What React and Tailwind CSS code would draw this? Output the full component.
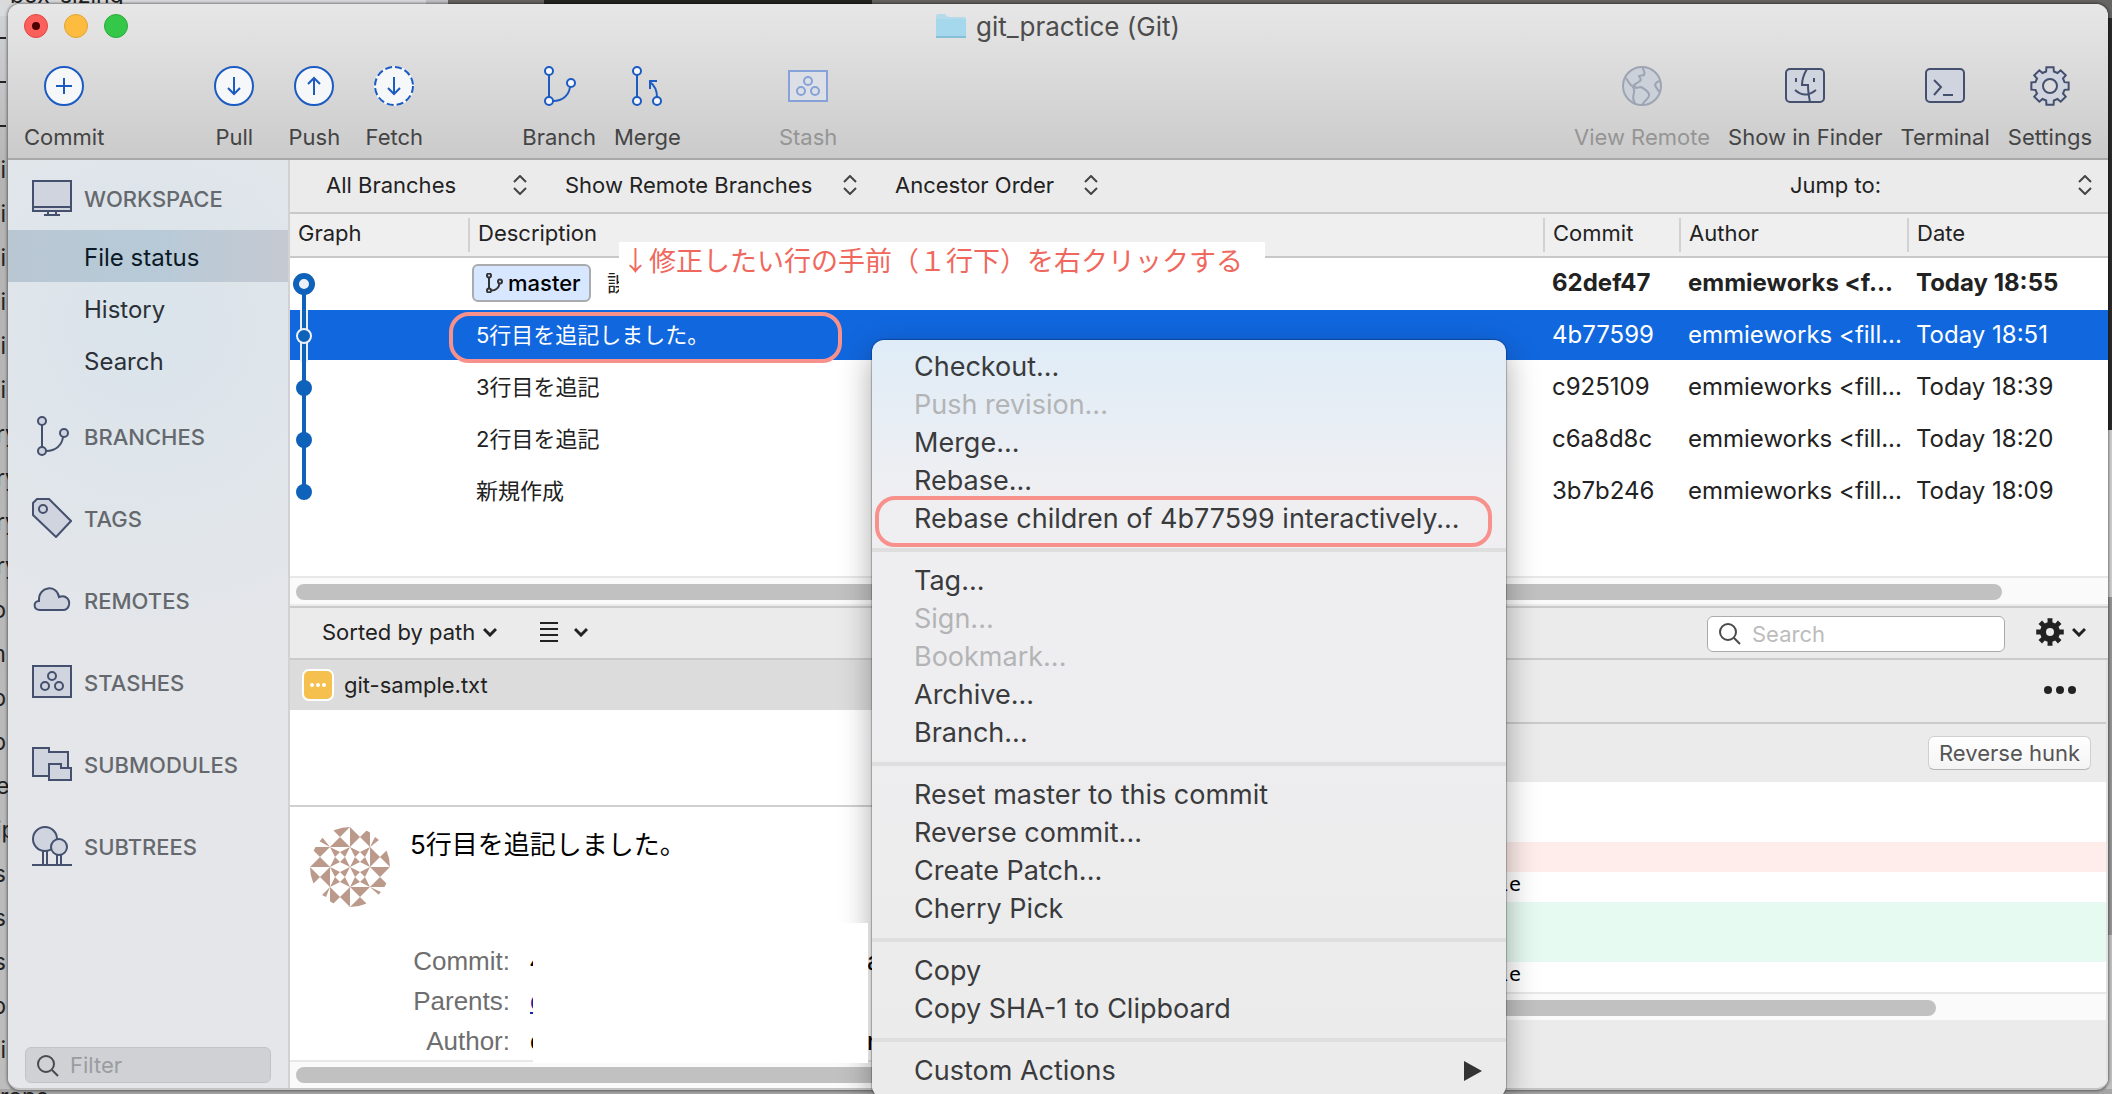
import React from "react";

const NAVY = "#44506e";
const BLUE = "#1b5bc2";
const PALE = "#cfd4df";

function gearPath(c, outer, root, teeth, tipHalf, baseHalf) {
  const pts = [];
  for (let i = 0; i < teeth; i++) {
    const a = (i * 2 * Math.PI) / teeth - Math.PI / 2;
    [
      [root, -baseHalf],
      [outer, -tipHalf],
      [outer, tipHalf],
      [root, baseHalf],
    ].forEach(([r, d]) => {
      pts.push(`${(c + r * Math.cos(a + d)).toFixed(2)} ${(c + r * Math.sin(a + d)).toFixed(2)}`);
    });
  }
  return `M${pts.join("L")}Z`;
}

function Icon({ children, stroke = NAVY, fill = PALE, className = "size-10" }) {
  return (
    <svg viewBox="0 0 40 40" className={`${className} shrink-0`} fill={fill} stroke={stroke} strokeWidth="2" aria-hidden="true">
      {children}
    </svg>
  );
}

const BranchShape = ({ fill }) => (
  <>
    <path d="M10 9V31" />
    <path d="M14 35C24 35 30 29 31 21" fill="none" />
    <circle cx="10" cy="5" r="4" fill={fill} />
    <circle cx="10" cy="35" r="4" fill={fill} />
    <circle cx="32" cy="17" r="4" fill={fill} />
  </>
);

const toolIcons = {
  commit: (
    <Icon stroke={BLUE} fill="#f6f7f9">
      <circle cx="20" cy="20" r="19" />
      <path d="M20 12V28M12 20H28" />
    </Icon>
  ),
  pull: (
    <Icon stroke={BLUE} fill="#f6f7f9">
      <circle cx="20" cy="20" r="19" />
      <path d="M20 11V28M14 22L20 28L26 22" fill="none" />
    </Icon>
  ),
  push: (
    <Icon stroke={BLUE} fill="#f6f7f9">
      <circle cx="20" cy="20" r="19" />
      <path d="M20 29V12M14 18L20 12L26 18" fill="none" />
    </Icon>
  ),
  fetch: (
    <Icon stroke={BLUE} fill="#f6f7f9">
      <circle cx="20" cy="20" r="20" stroke="none" />
      <circle cx="20" cy="20" r="19" strokeDasharray="7 3" />
      <path d="M20 11V28M14 22L20 28L26 22" fill="none" />
    </Icon>
  ),
  branch: (
    <Icon stroke={BLUE} fill="#f6f7f9">
      <BranchShape fill="#f6f7f9" />
    </Icon>
  ),
  merge: (
    <Icon stroke={BLUE} fill="#f6f7f9">
      <path d="M10 9V31" />
      <path d="M30 31C30 25 27 19 23 16M23 23V15H30" fill="none" />
      <circle cx="10" cy="5" r="4" />
      <circle cx="10" cy="35" r="4" />
      <circle cx="30" cy="35" r="4" />
    </Icon>
  ),
  stash: (
    <Icon stroke="#86a2d8" fill="#dcdfe6">
      <rect x="1" y="5" width="38" height="30" />
      <circle cx="20" cy="15" r="4" />
      <circle cx="13" cy="25" r="4" />
      <circle cx="27" cy="25" r="4" />
    </Icon>
  ),
  globe: (
    <Icon stroke="#9da4b2" fill="#cbd0d9">
      <circle cx="20" cy="20" r="19" />
      <path
        d="M21 1C20 4 24 5 22 9L17 10C18 13 20 13 18 15L12 19L14 22L19 21C23 23 25 24 27 28C28 33 22 34 20 39M4 12C6 15 7 18 10 20C13 22 12 24 12 27C11 30 10 33 13 37M39 15C34 15 32 19 34 21C35 23 36 25 38 26"
        fill="none"
      />
    </Icon>
  ),
  finder: (
    <Icon>
      <rect x="1" y="3" width="38" height="33" rx="4" />
      <path d="M22 3C19 8 17 14 17 19H23C23 25 24 31 25 36M11 12V16M29 12V16M10 24Q20 33 31 24" fill="none" />
    </Icon>
  ),
  terminal: (
    <Icon>
      <rect x="1" y="3" width="38" height="33" rx="4" />
      <path d="M9 14L16 21L9 29M18 29H28" fill="none" />
    </Icon>
  ),
  settings: (
    <Icon>
      <path d={gearPath(20, 19, 15, 8, 0.19, 0.26)} />
      <circle cx="20" cy="20" r="7" fill="#dcdcde" />
    </Icon>
  ),
};

function Tool({ icon, label, disabled, className = "" }) {
  return (
    <button type="button" disabled={disabled} className={`flex flex-col items-center gap-[17px] text-[#444] disabled:text-[#959595] ${className}`}>
      {toolIcons[icon]}
      <span className="text-[22px] leading-7 whitespace-nowrap">{label}</span>
    </button>
  );
}

const sideIcons = {
  WORKSPACE: (
    <Icon>
      <path d="M1 3H39V33H1ZM1 29H39M12 37H28M16 33V37M24 33V37" />
    </Icon>
  ),
  BRANCHES: (
    <Icon>
      <BranchShape fill={PALE} />
    </Icon>
  ),
  TAGS: (
    <Icon>
      <path d="M1 5L5 1H17L39 23L24 39L1 17Z" />
      <circle cx="11" cy="11" r="4" />
    </Icon>
  ),
  REMOTES: (
    <Icon>
      <path d="M8 30C1 30 1 21 7 21C6 6 25 4 27 17C34 14 38 20 37 25C36 29 33 30 31 30Z" />
    </Icon>
  ),
  STASHES: (
    <Icon>
      <path d="M1 4H39V35H1Z" />
      <circle cx="20" cy="14" r="4" />
      <circle cx="13" cy="24" r="4" />
      <circle cx="27" cy="24" r="4" />
    </Icon>
  ),
  SUBMODULES: (
    <Icon>
      <path d="M1 4H17V8H36V32H1Z" />
      <path d="M17 20H29V24H39V36H17Z" />
    </Icon>
  ),
  SUBTREES: (
    <Icon>
      <path d="M11 24V39M15 24V39M25 29V39M29 29V39" />
      <circle cx="13" cy="13" r="12" />
      <circle cx="27" cy="21" r="8" />
      <path d="M0 39H40" />
    </Icon>
  ),
};

function SideHead({ name }) {
  return (
    <a href={`#${name.toLowerCase()}`} className="flex items-center gap-3 pl-6 text-[22px] leading-7 font-medium text-[#65696e]">
      {sideIcons[name]}
      <span className="pt-0.5">{name}</span>
    </a>
  );
}

const UpDown = () => (
  <svg viewBox="0 0 14 20" className="pointer-events-none absolute top-1 right-0 h-5 w-3.5" fill="none" stroke="#444" strokeWidth="2" aria-hidden="true">
    <path d="M1 7L7 1L13 7M1 13L7 19L13 13" />
  </svg>
);

const Chevron = () => (
  <svg viewBox="0 0 14 10" className="h-2.5 w-3.5 shrink-0" fill="none" stroke="#222" strokeWidth="3" aria-hidden="true">
    <path d="M1 2L7 8L13 2" />
  </svg>
);

const Magnifier = ({ className }) => (
  <svg viewBox="0 0 22 22" className={`pointer-events-none absolute size-[22px] ${className}`} fill="none" stroke="#4a4a4a" strokeWidth="2" aria-hidden="true">
    <circle cx="9" cy="9" r="8" />
    <path d="M15 15L21 21" />
  </svg>
);

function Picker({ label, value, className }) {
  return (
    <div className={`relative ${className}`}>
      <select aria-label={label} className="block h-7 w-full cursor-default appearance-none bg-transparent text-[22px] leading-7 text-[#222] outline-none">
        <option>{value}</option>
      </select>
      <UpDown />
    </div>
  );
}

const commits = [
  { head: true, text: "誤", hash: "62def47", author: "emmieworks <f...", date: "Today 18:55", style: "font-bold text-[#222]" },
  { text: "5行目を追記しました。", hash: "4b77599", author: "emmieworks <fill...", date: "Today 18:51", style: "bg-[#1167de] text-white" },
  { text: "3行目を追記", hash: "c925109", author: "emmieworks <fill...", date: "Today 18:39", style: "text-[#222]" },
  { text: "2行目を追記", hash: "c6a8d8c", author: "emmieworks <fill...", date: "Today 18:20", style: "text-[#222]" },
  { text: "新規作成", hash: "3b7b246", author: "emmieworks <fill...", date: "Today 18:09", style: "text-[#222]" },
];

function Th({ children, first }) {
  return (
    <th scope="col" className="h-[42px] p-0 text-left font-normal">
      <div className={`h-[34px] leading-[30px] ${first ? "pl-2" : "-ml-0.5 border-l-2 border-[#d2d2d2] pl-2"}`}>{children}</div>
    </th>
  );
}

function CommitTable() {
  return (
    <div className="relative h-[362px] shrink-0 bg-white">
      <table className="w-full table-fixed border-collapse text-[24px]">
        <colgroup>
          <col className="w-[180px]" />
          <col />
          <col className="w-[136px]" />
          <col className="w-[228px]" />
          <col className="w-[199px]" />
        </colgroup>
        <thead className="bg-[#efefef] text-[22px] text-[#222] shadow-[0_2px_0_#c8c8c8]">
          <tr>
            <Th first>Graph</Th>
            <Th>Description</Th>
            <Th>Commit</Th>
            <Th>Author</Th>
            <Th>Date</Th>
          </tr>
        </thead>
        <tbody>
          <tr className="h-0.5">
            <td colSpan={5} className="p-0"></td>
          </tr>
          {commits.map((c) => (
            <React.Fragment key={c.hash}>
              <tr className={`${c.style} h-[50px] leading-8`}>
                <td className="p-0"></td>
                <td className="p-0 pl-1.5 text-[22px]">
                  {c.head ? (
                    <div className="-ml-1 flex items-center gap-4 font-normal">
                      <span className="flex h-[38px] w-[119px] items-center gap-1 rounded-md border-2 border-[#a9abae] bg-[#d6e7ff] pl-2.5 font-medium text-black">
                        <Icon stroke="#333" fill="none" className="size-5">
                          <g strokeWidth="4">
                            <BranchShape fill="none" />
                          </g>
                        </Icon>
                        master
                      </span>
                      <span className="w-3 overflow-hidden whitespace-nowrap">{c.text}</span>
                    </div>
                  ) : (
                    c.text
                  )}
                </td>
                <td className="p-0 pl-[7px]">{c.hash}</td>
                <td className="p-0 pl-[7px] whitespace-nowrap">{c.author}</td>
                <td className="p-0 pl-[7px] whitespace-nowrap">{c.date}</td>
              </tr>
              <tr className="h-0.5">
                <td colSpan={5} className="p-0"></td>
              </tr>
            </React.Fragment>
          ))}
        </tbody>
      </table>

      <svg viewBox="0 0 28 260" className="absolute top-11 left-0 h-[260px] w-7" fill="#0f62b9" aria-hidden="true">
        <path d="M10 52h8v52h-8z" fill="#e8f0fc" />
        <path d="M12 26h4v208h-4z" />
        <circle cx="14" cy="26" r="8" fill="#eef1f8" stroke="#0f62b9" strokeWidth="6" />
        <circle cx="14" cy="78" r="7" stroke="#eef3fc" strokeWidth="2" />
        <circle cx="14" cy="130" r="8" />
        <circle cx="14" cy="182" r="8" />
        <circle cx="14" cy="234" r="8" />
      </svg>

      <p className="absolute top-7 left-[329px] h-16 w-[646px] bg-white pl-[3px] font-['Noto_Sans_CJK_JP',sans-serif] text-[27px] leading-9 whitespace-nowrap text-[#f0685d]">
        ↓修正したい行の手前（１行下）を右クリックする
      </p>
      <div className="absolute top-[98px] left-[159px] h-[51px] w-[393px] rounded-[20px] border-4 border-[#f8908b]"></div>
    </div>
  );
}

function ScrollTrack({ className, children }) {
  return <div className={`flex h-7 shrink-0 items-center border-t-2 border-[#e8e8e8] bg-[#fafafa] pl-1.5 ${className}`}>{children}</div>;
}

const menu = [
  [["Checkout..."], ["Push revision...", true], ["Merge..."], ["Rebase..."], ["Rebase children of 4b77599 interactively..."]],
  [["Tag..."], ["Sign...", true], ["Bookmark...", true], ["Archive..."], ["Branch..."]],
  [["Reset master to this commit"], ["Reverse commit..."], ["Create Patch..."], ["Cherry Pick"]],
  [["Copy"], ["Copy SHA-1 to Clipboard"]],
  [["Custom Actions"]],
];

function ContextMenu() {
  return (
    <div
      role="menu"
      className="absolute top-[340px] left-[872px] z-10 w-[634px] rounded-xl bg-linear-to-b from-[#dfecf7] via-[#efeff2] via-20% to-[#ebebeb] pt-2 pb-2 shadow-[0_0_1px_1px_rgba(0,0,0,0.25),0_12px_32px_rgba(0,0,0,0.35)]"
    >
      {menu.map((group, g) => (
        <div key={g} className={g ? "mt-2.5 border-t-4 border-[#dedede] pt-2.5" : ""}>
          {group.map(([label, disabled]) => (
            <button
              key={label}
              type="button"
              role="menuitem"
              disabled={disabled}
              className="flex h-[38px] w-full items-center justify-between pr-6 pl-[42px] text-left text-[27px] leading-9 whitespace-nowrap text-[#3a3b3d] disabled:text-[#b3b4b6]"
            >
              {label}
              {label === "Custom Actions" && (
                <svg viewBox="0 0 18 20" className="h-5 w-[18px]" fill="#333" aria-hidden="true">
                  <path d="M0 0L18 10L0 20Z" />
                </svg>
              )}
            </button>
          ))}
        </div>
      ))}
      <div className="absolute top-[156px] left-[3px] h-[51px] w-[617px] rounded-[20px] border-4 border-[#f8908b]"></div>
    </div>
  );
}

function Avatar() {
  const vertical = [[20, 0], [0, 20], [60, 40], [40, 60]];
  const sideways = [[40, 0], [60, 20], [0, 40], [20, 60]];
  const quads = [[20, 20], [40, 20], [20, 40], [40, 40]];
  return (
    <svg viewBox="0 0 80 80" className="size-20 shrink-0" fill="#bb998b" role="img" aria-label="Author avatar">
      <clipPath id="disc">
        <circle cx="40" cy="40" r="40" />
      </clipPath>
      <g clipPath="url(#disc)">
        {vertical.map(([x, y]) => (
          <path key={`${x}-${y}`} transform={`translate(${x} ${y})`} d="M0 0H20L0 20H20Z" />
        ))}
        {sideways.map(([x, y]) => (
          <path key={`${x}-${y}`} transform={`translate(${x} ${y})`} d="M0 0V20L20 0V20Z" />
        ))}
        {quads.map(([x, y]) => (
          <path key={`${x}-${y}`} transform={`translate(${x} ${y})`} d="M0 0L10 5L5 10ZM20 0L10 5L15 10ZM0 20L5 10L10 15ZM20 20L15 10L10 15Z" />
        ))}
        <path d="M20 20L9 14L12 10ZM60 20L65 10L69 13ZM20 60L12 68L16 70ZM60 60L69 68L71 65Z" />
      </g>
    </svg>
  );
}

function FilePane() {
  return (
    <div className="flex w-[810px] shrink-0 flex-col bg-white">
      <button type="button" className="flex h-[50px] shrink-0 items-center gap-2.5 bg-[#dcdcdc] pl-3 text-[22px] text-[#222]">
        <svg viewBox="0 0 32 32" className="size-8" aria-hidden="true">
          <rect x="1" y="1" width="30" height="30" rx="6" fill="#f5c04e" stroke="#fff" strokeWidth="2" />
          <g fill="#fff">
            <circle cx="10" cy="16" r="2" />
            <circle cx="16" cy="16" r="2" />
            <circle cx="22" cy="16" r="2" />
          </g>
        </svg>
        git-sample.txt
      </button>
      <div className="h-[95px] shrink-0"></div>
      <div className="relative min-h-0 flex-1 border-t-2 border-[#d0d0d0]">
        <div className="flex gap-5 pt-5 pl-5">
          <Avatar />
          <p className="text-[26px] leading-9 text-black">5行目を追記しました。</p>
        </div>
        <dl className="mt-[34px] grid grid-cols-[220px_1fr] gap-x-5 font-['Liberation_Sans',sans-serif] text-[26px] leading-10 text-black">
          <dt className="text-right text-[#6e6e6e]">Commit:</dt>
          <dd className="flex">
            <span className="w-[337px]">4</span>a
          </dd>
          <dt className="text-right text-[#6e6e6e]">Parents:</dt>
          <dd>
            <a href="#parent" className="text-[#1a22a8] underline">
              c
            </a>
          </dd>
          <dt className="text-right text-[#6e6e6e]">Author:</dt>
          <dd className="flex">
            <span className="w-[337px]">e</span>r
          </dd>
        </dl>
        <div className="absolute top-[116px] left-[243px] z-20 h-[140px] w-[335px] bg-white"></div>
      </div>
      <ScrollTrack className="relative">
        <div className="h-4 w-full rounded-full bg-[#c1c1c1]"></div>
      </ScrollTrack>
    </div>
  );
}

function DiffPane() {
  const eof = "\\ No newline at end of file";
  return (
    <div className="flex min-w-0 flex-1 flex-col border-r-2 border-[#e2e2e2] bg-[#ebebeb]">
      <div className="flex h-16 shrink-0 items-center justify-end border-b-2 border-[#cacaca] pr-[30px]">
        <button type="button" aria-label="More" className="flex gap-1 pb-0.5">
          <span className="size-2 rounded-full bg-[#222]"></span>
          <span className="size-2 rounded-full bg-[#222]"></span>
          <span className="size-2 rounded-full bg-[#222]"></span>
        </button>
      </div>
      <div className="flex h-[58px] shrink-0 items-center justify-end pr-[15px]">
        <button
          type="button"
          className="h-[34px] rounded-md border border-[#cfcfcf] border-b-[#b5b5b5] bg-linear-to-b from-white to-[#f4f4f4] px-2.5 text-[22px] leading-7 text-[#555]"
        >
          Reverse hunk
        </button>
      </div>
      <pre className="shrink-0 overflow-hidden bg-white font-['DejaVu_Sans_Mono',monospace] text-[20px] text-black">
        <div className="h-15"></div>
        <div className="h-[30px] bg-[#feedea]"></div>
        <div className="h-[30px] pl-24 leading-6">{eof}</div>
        <div className="h-15 bg-[#e6faf1]"></div>
        <div className="h-[30px] pl-24 leading-6">{eof}</div>
      </pre>
      <ScrollTrack className="pt-0.5">
        <div className="mr-[170px] h-4 w-full rounded-full bg-[#c1c1c1]"></div>
      </ScrollTrack>
    </div>
  );
}

const edgeText = ["i", "i", "i", "i", "i", "i", "ry", "ry", "ry", "ry", "o", "m", "b", "b", "el", "ip", "s", "s", "s", "b", "i"];

function Desktop() {
  return (
    <div className="absolute inset-0 flex flex-col overflow-hidden bg-[#acacac] text-[23px] text-[#222]" aria-hidden="true">
      <div className="flex h-10 shrink-0 bg-[#666563]">
        <div className="h-full w-[426px] bg-[#d9dadc] pl-2.5 leading-none">
          <div className="-mt-4">box-sizing</div>
        </div>
        <div className="h-full w-[22px] bg-[#c2c2c4]"></div>
        <div className="h-full w-24 bg-[#666563]"></div>
        <div className="h-full w-[328px] bg-[#232321]"></div>
        <div className="h-full flex-1"></div>
      </div>
      <div className="-mt-10 flex min-h-0 flex-1 justify-between">
        <div className="mt-4 flex w-2.5 flex-col bg-linear-to-b from-[#d0d1d4] via-[#b4b4b4] via-15% to-[#bdbdbd]">
          {[0, 1, 2].map((n) => (
            <div key={n} className="flex h-11 shrink-0 items-center">
              <div className="h-0.5 w-1.5 bg-[#222]"></div>
            </div>
          ))}
          {edgeText.map((t, i) => (
            <span key={i} className={`flex h-11 shrink-0 items-center ${t.length > 1 ? "-ml-1 justify-start" : "justify-end pr-1"}`}>
              {t}
            </span>
          ))}
        </div>
        <div className="flex w-1.5 flex-col">
          <div className="mt-[18px] h-[412px] bg-[#2a2a28]"></div>
          <div className="h-[167px] bg-[#cfcfcf]"></div>
          <div className="h-[338px] bg-[#959595]"></div>
          <div className="flex-1 bg-[#c0c0c0]"></div>
        </div>
      </div>
      <div className="h-[5px] shrink-0 bg-[#a6a6a6] leading-4">rops</div>
    </div>
  );
}

export default function App() {
  return (
    <div className="relative flex h-screen min-h-[1094px] flex-col overflow-hidden pt-1 pr-1 pb-1 pl-2 font-['Inter','Noto_Sans_CJK_JP',sans-serif]">
      <Desktop />
      <main className="relative flex min-h-0 flex-1 flex-col overflow-hidden rounded-xl border-b-2 border-[#c4c4c4] bg-[#ebebeb] shadow-[0_0_3px_1px_rgba(0,0,0,0.45)]">
        <header className="flex h-[156px] shrink-0 flex-col border-b-2 border-[#a8a8a8] bg-linear-to-b from-[#e7e7e7] to-[#cbcbcb]">
          <div className="relative flex h-11 shrink-0 items-center justify-center gap-2.5">
            <div className="absolute top-2.5 left-4 flex gap-4">
              <button type="button" aria-label="Close" className="flex size-6 items-center justify-center rounded-full border border-[#e2463f] bg-[#fc605c]">
                <span className="size-2 rounded-full bg-[#4d0000]"></span>
              </button>
              <button type="button" aria-label="Minimize" className="size-6 rounded-full border border-[#e1a32f] bg-[#fdbc40]"></button>
              <button type="button" aria-label="Zoom" className="size-6 rounded-full border border-[#28ab37] bg-[#34c749]"></button>
            </div>
            <svg viewBox="0 0 30 24" className="h-6 w-[30px]" aria-hidden="true">
              <path d="M0 23V2Q0 0 2 0H9L12 3H28Q30 3 30 5V23Z" fill="#b5dbeb" />
              <path d="M0 5H30V23H0Z" fill="#a5d7ed" />
              <path d="M0 23H30" stroke="#86bfd8" strokeWidth="2" />
            </svg>
            <h1 className="pt-0.5 text-[26px] leading-8 text-[#4c4c4c]">git_practice (Git)</h1>
          </div>
          <div className="flex items-start pt-[18px] pr-4 pl-4">
            <Tool icon="commit" label="Commit" />
            <div className="ml-[90px] flex">
              <Tool icon="pull" label="Pull" className="w-20" />
              <Tool icon="push" label="Push" className="w-20" />
              <Tool icon="fetch" label="Fetch" className="w-20" />
            </div>
            <div className="ml-[88px] flex gap-[18px]">
              <Tool icon="branch" label="Branch" />
              <Tool icon="merge" label="Merge" />
            </div>
            <div className="ml-[98px]">
              <Tool icon="stash" label="Stash" disabled />
            </div>
            <div className="ml-auto flex gap-[18px]">
              <Tool icon="globe" label="View Remote" disabled />
              <Tool icon="finder" label="Show in Finder" />
              <Tool icon="terminal" label="Terminal" />
              <Tool icon="settings" label="Settings" />
            </div>
          </div>
        </header>

        <div className="flex min-h-0 flex-1">
          <nav className="flex w-[282px] shrink-0 flex-col border-r-2 border-[#d2d2d4] bg-[radial-gradient(circle_at_50%_18%,#dae4eb_0,#e4e6ea_320px)]">
            <div className="h-[70px] pt-[18px]">
              <SideHead name="WORKSPACE" />
            </div>
            {["File status", "History", "Search"].map((t, i) => (
              <a
                key={t}
                href={`#${t.split(" ")[0].toLowerCase()}`}
                className={`h-[52px] shrink-0 pl-[76px] text-[24px] leading-[56px] ${i ? "text-[#2b3137]" : "bg-linear-to-r from-[#b9c7d3] via-[#b7cad8] to-[#c5c9d2] text-[#0b1a26]"}`}
              >
                {t}
              </a>
            ))}
            <div className="mt-[30px] flex flex-col gap-[42px]">
              {["BRANCHES", "TAGS", "REMOTES", "STASHES", "SUBMODULES", "SUBTREES"].map((n) => (
                <SideHead key={n} name={n} />
              ))}
            </div>
            <div className="relative mr-[17px] mb-[5px] ml-[17px] mt-auto">
              <Magnifier className="top-2 left-3" />
              <input
                aria-label="Filter"
                placeholder="Filter"
                className="block h-9 w-full rounded-md border border-[#c2c4c7] bg-[#cfd1d5] pl-11 text-[22px] outline-none placeholder:text-[#9a9ca0]"
              />
            </div>
          </nav>

          <section className="flex min-w-0 flex-1 flex-col">
            <div className="flex h-[54px] shrink-0 items-center border-b-2 border-[#c8c8c8] bg-[#ebebeb] pr-4 pb-0.5 pl-9">
              <Picker label="Branches" value="All Branches" className="w-[201px]" />
              <Picker label="Remote branches" value="Show Remote Branches" className="ml-[38px] w-[292px]" />
              <Picker label="Order" value="Ancestor Order" className="ml-[38px] w-[203px]" />
              <label htmlFor="jump" className="ml-auto text-[22px] leading-7 text-[#222]">
                Jump to:
              </label>
              <div className="relative w-[211px]">
                <select id="jump" className="block h-7 w-full appearance-none bg-transparent outline-none"></select>
                <UpDown />
              </div>
            </div>

            <CommitTable />
            <ScrollTrack className="pt-0.5">
              <div className="mr-[106px] h-4 w-full rounded-full bg-[#c1c1c1]"></div>
            </ScrollTrack>

            <div className="mt-0.5 flex h-[54px] shrink-0 items-center justify-between border-y-2 border-[#cacaca] bg-[#ebebeb] pr-[22px] pl-8">
              <div className="flex items-center pb-0.5 text-[22px] text-[#222]">
                <button type="button" className="flex items-center gap-2">
                  Sorted by path <Chevron />
                </button>
                <button type="button" aria-label="View mode" className="ml-[43px] flex items-center gap-4">
                  <svg viewBox="0 0 18 20" className="h-5 w-[18px]" stroke="#222" strokeWidth="2" aria-hidden="true">
                    <path d="M0 1H18M0 7H18M0 13H18M0 19H18" />
                  </svg>
                  <Chevron />
                </button>
              </div>
              <div className="flex items-center">
                <div className="relative pt-0.5">
                  <Magnifier className="top-[9px] left-3" />
                  <input
                    aria-label="Search"
                    placeholder="Search"
                    className="block h-9 w-[298px] rounded-md border border-[#acacac] bg-white pl-11 text-[22px] outline-none placeholder:text-[#bcbcbc]"
                  />
                </div>
                <button type="button" aria-label="Options" className="ml-[31px] flex items-center gap-2 pb-0.5">
                  <svg viewBox="0 0 28 28" className="size-7" fill="#222" fillRule="evenodd" aria-hidden="true">
                    <path d={`${gearPath(14, 14, 10, 8, 0.18, 0.24)}M18 14A4 4 0 1 0 10 14A4 4 0 1 0 18 14Z`} />
                  </svg>
                  <Chevron />
                </button>
              </div>
            </div>

            <div className="flex min-h-0 flex-1">
              <FilePane />
              <DiffPane />
            </div>
          </section>
        </div>
      </main>
      <ContextMenu />
    </div>
  );
}
